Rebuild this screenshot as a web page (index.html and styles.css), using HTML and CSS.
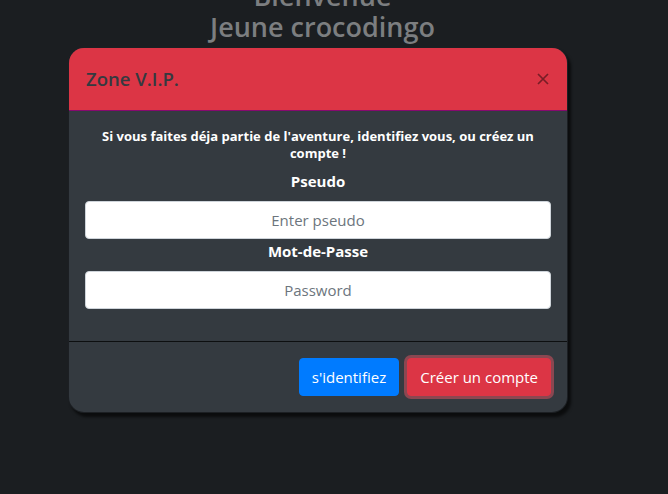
FILE: index.html
```html
<!DOCTYPE html>
<html lang="fr">
<head>
<meta charset="utf-8">
<title>Zone V.I.P.</title>
<link rel="stylesheet" href="styles.css">
</head>
<body>
<div class="page">
  <h1 class="welcome">Bienvenue<br>Jeune crocodingo</h1>
  <div class="modal">
    <div class="modal-header">
      <h5 class="modal-title">Zone V.I.P.</h5>
      <button class="close" type="button" aria-label="Close">
        <svg width="12" height="12" viewBox="0 0 12 12"><path d="M1 1 L11 11 M11 1 L1 11" stroke="currentColor" stroke-width="1.7" fill="none"/></svg>
      </button>
    </div>
    <div class="modal-body">
      <p class="intro">Si vous faites déja partie de l'aventure, identifiez vous, ou créez un compte !</p>
      <label class="field-label" for="pseudo">Pseudo</label>
      <input class="field" id="pseudo" type="text" placeholder="Enter pseudo">
      <label class="field-label" for="pwd">Mot-de-Passe</label>
      <input class="field field-last" id="pwd" type="password" placeholder="Password">
    </div>
    <div class="modal-footer">
      <button class="btn btn-primary" type="button">s'identifiez</button>
      <button class="btn btn-danger" type="button">Créer un compte</button>
    </div>
  </div>
</div>
</body>
</html>
```
FILE: styles.css
```css
html, body {
  margin: 0;
  padding: 0;
  background: #1b1e21;
  font-family: "Open Sans", "Noto Sans", sans-serif;
}

.page {
  width: 645px;
  overflow: hidden;
  height: 494px;
}

.welcome {
  margin: -20px 0 0 0;
  text-align: center;
  font-size: 27px;
  line-height: 31px;
  font-weight: 600;
  color: #7c7e80;
}

.modal {
  width: 500px;
  box-sizing: border-box;
  margin: 5px 0 0 68px;
  background: #343a40;
  border: 1px solid rgba(0, 0, 0, 0.45);
  border-radius: 16px;
  overflow: hidden;
  box-shadow: 3px 4px 3px rgba(0, 0, 0, 0.6);
}

.modal-header {
  display: flex;
  justify-content: space-between;
  align-items: flex-start;
  padding: 16px 18px 16px 17px;
  background: #dc3545;
  border-bottom: 1px solid #85096f;
}

.modal-title {
  margin: 0;
  font-size: 18.5px;
  line-height: 30px;
  font-weight: 600;
  color: #343a40;
}

.close {
  margin-top: 9px;
  padding: 0;
  border: 0;
  background: transparent;
  color: rgba(0, 0, 0, 0.45);
  display: flex;
}

.modal-body {
  padding: 17px 16px 16px;
  text-align: center;
  color: #ffffff;
}

.intro {
  margin: 0 0 7px 0;
  font-size: 13px;
  line-height: 17px;
  font-weight: 700;
}

.field-label {
  display: block;
  margin-bottom: 8px;
  font-size: 15px;
  line-height: 24px;
  font-weight: 700;
}

.field {
  display: block;
  box-sizing: border-box;
  width: 100%;
  height: 38px;
  padding: 6px 12px;
  border: 1px solid #ced4da;
  border-radius: 4px;
  background: #ffffff;
  font-family: inherit;
  font-size: 15px;
  text-align: center;
  color: #495057;
}

.field::placeholder {
  color: #6c757d;
}

.field-last {
  margin-bottom: 16px;
}

.modal-footer {
  display: flex;
  justify-content: flex-end;
  gap: 8px;
  padding: 16px;
  border-top: 1px solid #0d0f10;
}

.btn {
  height: 38px;
  padding: 0 12px;
  border: 1px solid transparent;
  border-radius: 4px;
  font-family: inherit;
  font-size: 15px;
  line-height: 24px;
  color: #ffffff;
}

.btn-primary {
  background: #007bff;
  border-color: #007bff;
}

.btn-danger {
  background: #dc3545;
  border-color: #dc3545;
  box-shadow: 0 0 0 3px rgba(225, 83, 97, 0.5);
}
```
